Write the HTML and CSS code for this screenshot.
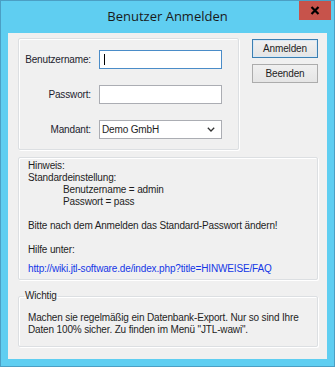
FILE: index.html
```html
<!DOCTYPE html>
<html>
  <head>
    <meta charset="UTF-8">
    <title>Benutzer Anmelden</title>
    <link rel="stylesheet" href="styles.css">
  </head>
  <body>
    <div class="window">
      <div class="titlebar">
        <span class="title">Benutzer Anmelden</span>
        <div class="close">
          <svg width="10" height="9" viewBox="0 0 10 9">
            <path d="M1.5 1 L8.5 8 M8.5 1 L1.5 8" stroke="#000" stroke-width="2.2" fill="none"/>
          </svg>
        </div>
      </div>

      <div class="client">
        <div class="top">
          <div class="group login">
            <label>Benutzername:</label>
            <div class="field focused"><span class="caret"></span></div>
            <label>Passwort:</label>
            <div class="field"></div>
            <label>Mandant:</label>
            <div class="field select">
              <span>Demo GmbH</span>
              <svg width="8" height="5" viewBox="0 0 8 5">
                <path d="M0.8 0.8 L4 4 L7.2 0.8" stroke="#333" stroke-width="1.3" fill="none"/>
              </svg>
            </div>
          </div>
          <div class="buttons">
            <button class="btn default">Anmelden</button>
            <button class="btn">Beenden</button>
          </div>
        </div>

        <div class="group hint">
          <div class="line">Hinweis:</div>
          <div class="line">Standardeinstellung:</div>
          <div class="line indent">Benutzername = admin</div>
          <div class="line indent">Passwort = pass</div>
          <div class="line">&nbsp;</div>
          <div class="line">Bitte nach dem Anmelden das Standard-Passwort ändern!</div>
          <div class="line">&nbsp;</div>
          <div class="line">Hilfe unter:</div>
          <a class="link" href="#">http://wiki.jtl-software.de/index.php?title=HINWEISE/FAQ</a>
        </div>

        <fieldset class="important">
          <legend>Wichtig</legend>
          <div class="line">Machen sie regelmäßig ein Datenbank-Export. Nur so sind Ihre</div>
          <div class="line">Daten 100% sicher. Zu finden im Menü "JTL-wawi".</div>
        </fieldset>
      </div>
    </div>
  </body>
</html>
```

FILE: styles.css
```css
body, html {
  margin: 0;
}

body {
  font-family: "Liberation Sans", Arial, sans-serif;
  font-size: 10px;
  letter-spacing: -0.15px;
  color: #1e1e1e;
}

.window {
  position: relative;
  width: 335px;
  height: 367px;
  box-sizing: border-box;
  border: 1px solid #4b9fc4;
  background: #5fcef1;
}

.titlebar {
  height: 32px;
  display: flex;
  align-items: center;
  justify-content: center;
}

.title {
  font-family: "Open Sans", "Liberation Sans", sans-serif;
  font-size: 13px;
  letter-spacing: 0;
  color: #1a1a1a;
  margin-top: -3px;
}

.close {
  position: absolute;
  top: 0;
  left: 298px;
  width: 32px;
  height: 19px;
  background: #c7534b;
  display: flex;
  align-items: center;
  justify-content: center;
}

.client {
  margin: 0 7px;
  height: 326px;
  background: #f0f0f0;
  padding: 5px 0 0 10px;
  box-sizing: border-box;
}

.top {
  display: flex;
  align-items: flex-start;
}

.group {
  border: 1px solid #dcdfe2;
  border-radius: 2px;
  box-shadow: inset 1px 1px 0 #fff, 1px 1px 0 #fff;
}

.login {
  width: 221px;
  height: 112px;
  box-sizing: border-box;
  display: grid;
  grid-template-columns: 72px 123px;
  grid-auto-rows: 19px;
  column-gap: 8px;
  row-gap: 16px;
  padding-top: 11px;
}

.login label {
  text-align: right;
  align-self: center;
  color: #1c1c2e;
}

.field {
  box-sizing: border-box;
  background: #fff;
  border: 1px solid #abadb3;
  display: flex;
  align-items: center;
}

.field.focused {
  border-color: #4a8cc8;
}

.caret {
  width: 1px;
  height: 11px;
  margin-left: 4px;
  background: #000;
}

.select {
  justify-content: space-between;
  padding: 0 6px 0 2px;
  color: #1e1e1e;
}

.buttons {
  display: flex;
  flex-direction: column;
  gap: 6px;
  margin: 1px 0 0 13px;
}

.btn {
  width: 66px;
  height: 19px;
  padding: 0;
  font: inherit;
  letter-spacing: inherit;
  color: #1e1e1e;
  border: 1px solid #acacac;
  background: linear-gradient(#f0f0f0, #e5e5e5);
}

.btn.default {
  border-color: #3c7fb1;
  box-shadow: inset 0 0 0 1px #d8e8f5;
}

.hint {
  width: 300px;
  height: 123px;
  box-sizing: border-box;
  margin-top: 7px;
  padding: 2px 0 0 9px;
}

.line {
  line-height: 12px;
  white-space: nowrap;
}

.indent {
  padding-left: 35px;
}

.link {
  display: block;
  margin-top: 7px;
  line-height: 12px;
  color: #1537e6;
  text-decoration: none;
}

.important {
  width: 300px;
  box-sizing: border-box;
  margin: 10px 0 0 0;
  padding: 10px 9px 10px 9px;
  border: 1px solid #dcdfe2;
  border-radius: 2px;
  box-shadow: inset 1px 1px 0 #fff, 1px 1px 0 #fff;
}

.important legend {
  padding: 0 1px;
  margin-left: -4px;
  line-height: 12px;
}
```
